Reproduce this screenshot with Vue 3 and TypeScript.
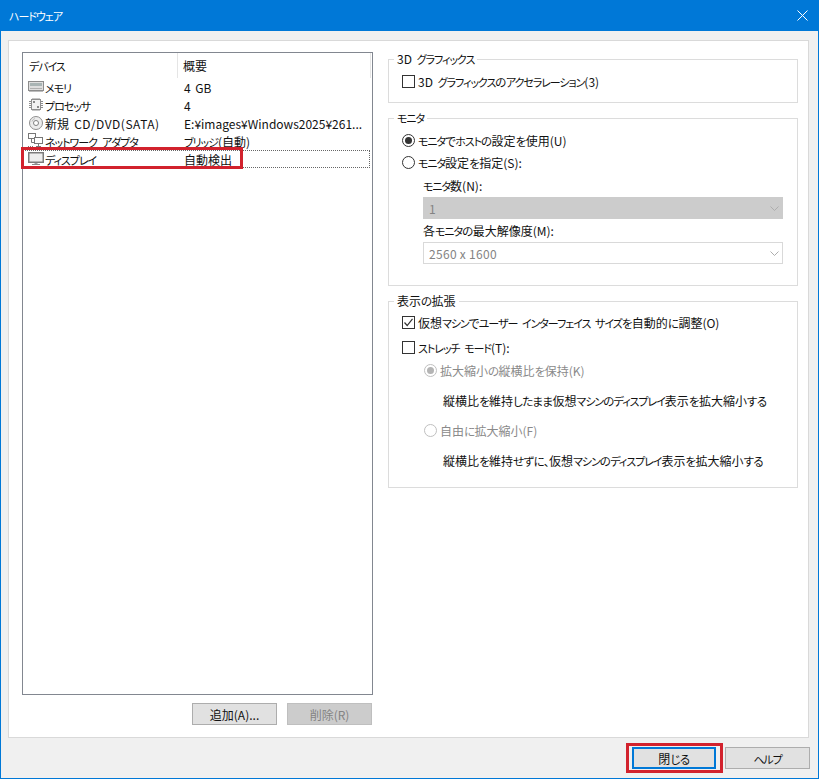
<script setup lang="ts">
import { h } from 'vue'

interface Device {
  icon: 'memory' | 'cpu' | 'disc' | 'network' | 'display'
  name: string
  summary: string
}

const devices: Device[] = [
  { icon: 'memory', name: 'メモリ', summary: '4 GB' },
  { icon: 'cpu', name: 'プロセッサ', summary: '4' },
  { icon: 'disc', name: '新規 CD/DVD(SATA)', summary: 'E:¥images¥Windows2025¥261...' },
  { icon: 'network', name: 'ネットワーク アダプタ', summary: 'ブリッジ(自動)' },
  { icon: 'display', name: 'ディスプレイ', summary: '自動検出' },
]

// Meiryo UI has narrow kana and full width kanji, so each script gets its own run
const runs = /[\u4e00-\u9fff]+|[\u3040-\u309f、]+|[\u30a0-\u30ff]+|[^\u4e00-\u9fff\u3040-\u309f、\u30a0-\u30ff]+/g

function runClass(run: string) {
  if (/[\u4e00-\u9fff]/.test(run)) return 'kanji'
  if (/[\u3040-\u309f、]/.test(run)) return 'hira'
  if (/[\u30a0-\u30ff]/.test(run)) return 'kata'
  return 'latin'
}

const T = (props: { s: string }) =>
  h(
    'span',
    { class: 'jp' },
    (props.s.match(runs) ?? []).map((run) => h('span', { class: runClass(run) }, run)),
  )
T.props = ['s']
</script>

<template>
  <div class="window">
    <header class="titlebar">
      <T s="ハードウェア" />
      <svg class="close-x" width="11" height="11" viewBox="0 0 11 11">
        <path d="M0.5 0.5 L10.5 10.5 M10.5 0.5 L0.5 10.5" stroke="#fff" stroke-width="1" fill="none" />
      </svg>
    </header>

    <div class="content">
      <main class="panel">
        <section class="left">
          <div class="list">
            <div class="list-head">
              <span class="col-name"><T s="デバイス" /></span>
              <span class="col-sum"><T s="概要" /></span>
            </div>
            <div
              v-for="d in devices"
              :key="d.icon"
              class="row"
              :class="{ focused: d.icon === 'display' }"
            >
              <span class="col-name cell">
                <svg class="dev-icon" width="17" height="16" viewBox="0 0 17 16">
                  <g v-if="d.icon === 'memory'" fill="none">
                    <rect x="0.5" y="2.5" width="15" height="9" fill="#dedede" stroke="#8c8c8c" />
                    <rect x="2" y="4" width="12" height="3" fill="#a9b4b4" />
                    <path d="M2 9.5h12" stroke="#b0b0b0" />
                    <path d="M1 12.5h14" stroke="#bdbdbd" />
                  </g>
                  <g v-else-if="d.icon === 'cpu'" fill="none" stroke="#8f8f8f">
                    <rect x="3.5" y="2.5" width="9" height="10" fill="#f2f2f2" />
                    <rect x="5" y="4" width="2" height="2" fill="#8a8a8a" stroke="none" />
                    <rect x="9" y="9" width="2" height="2" fill="#8a8a8a" stroke="none" />
                    <path d="M1 4.5h2M1 6.5h2M1 8.5h2M1 10.5h2M13 4.5h2M13 6.5h2M13 8.5h2M13 10.5h2M5 1v1M7 1v1M9 1v1M11 1v1M5 13v1M7 13v1M9 13v1M11 13v1" />
                  </g>
                  <g v-else-if="d.icon === 'disc'" fill="none">
                    <circle cx="8" cy="8" r="6.5" fill="#ececec" stroke="#8f8f8f" />
                    <circle cx="8" cy="8" r="2.5" fill="#fff" stroke="#808080" />
                    <path d="M4 6.5a4.5 4.5 0 0 1 3-3" stroke="#bdbdbd" />
                  </g>
                  <g v-else-if="d.icon === 'network'" fill="none" stroke="#777">
                    <rect x="0.5" y="0.5" width="7" height="5" fill="#fff" />
                    <rect x="6.5" y="4.5" width="8" height="6" fill="#fff" />
                    <path d="M3.5 6v3.5h3M10.5 11v2M8 13.5h5" />
                    <path d="M0 13.5h6" stroke-dasharray="1 1" />
                  </g>
                  <g v-else fill="none">
                    <rect x="0.75" y="1.75" width="14.5" height="9.5" fill="#ededed" stroke="#7c7c7c" stroke-width="1.5" />
                    <path d="M6.5 12.5h3" stroke="#a0a0a0" />
                    <path d="M4 13.5h8" stroke="#8a8a8a" />
                  </g>
                </svg>
                <span class="dev-name"><T :s="d.name" /></span>
              </span>
              <span class="col-sum"><T :s="d.summary" /></span>
            </div>
          </div>
          <div class="list-actions">
            <button class="btn" type="button"><T s="追加(A)..." /></button>
            <button class="btn disabled" type="button"><T s="削除(R)" /></button>
          </div>
          <div class="mark mark-row"></div>
        </section>

        <section class="right">
          <fieldset class="group">
            <legend><T s="3D グラフィックス" /></legend>
            <div class="pad-3d">
              <label class="opt">
                <span class="box"></span><T s="3D グラフィックスのアクセラレーション(3)" />
              </label>
            </div>
          </fieldset>

          <fieldset class="group">
            <legend><T s="モニタ" /></legend>
            <div class="pad-monitor">
              <label class="opt">
                <span class="radio on"></span><T s="モニタでホストの設定を使用(U)" />
              </label>
              <label class="opt">
                <span class="radio"></span><T s="モニタ設定を指定(S):" />
              </label>
              <div class="monitor-fields">
                <div class="field-label"><T s="モニタ数(N):" /></div>
                <div class="select filled">
                  <span>1</span>
                  <svg width="9" height="5" viewBox="0 0 9 5"><path d="M0.5 0.5 L4.5 4.5 L8.5 0.5" fill="none" stroke="#adadad" /></svg>
                </div>
                <div class="field-label second"><T s="各モニタの最大解像度(M):" /></div>
                <div class="select">
                  <span>2560 x 1600</span>
                  <svg width="9" height="5" viewBox="0 0 9 5"><path d="M0.5 0.5 L4.5 4.5 L8.5 0.5" fill="none" stroke="#adadad" /></svg>
                </div>
              </div>
            </div>
          </fieldset>

          <fieldset class="group">
            <legend><T s="表示の拡張" /></legend>
            <div class="pad-ext">
              <label class="opt">
                <span class="box">
                  <svg width="11" height="11" viewBox="0 0 11 11"><path d="M1.5 5.5 L4.2 8.5 L9.5 1.8" fill="none" stroke="#333" stroke-width="1.2" /></svg>
                </span><T s="仮想マシンでユーザー インターフェイス サイズを自動的に調整(O)" />
              </label>
              <label class="opt stretch">
                <span class="box"></span><T s="ストレッチ モード(T):" />
              </label>
              <div class="stretch-modes">
                <label class="opt off">
                  <span class="radio on"></span><T s="拡大縮小の縦横比を保持(K)" />
                </label>
                <p class="desc first"><T s="縦横比を維持したまま仮想マシンのディスプレイ表示を拡大縮小する" /></p>
                <label class="opt off">
                  <span class="radio"></span><T s="自由に拡大縮小(F)" />
                </label>
                <p class="desc"><T s="縦横比を維持せずに、仮想マシンのディスプレイ表示を拡大縮小する" /></p>
              </div>
            </div>
          </fieldset>
        </section>
      </main>

      <footer class="footer">
        <div class="close-wrap">
          <button class="btn primary" type="button"><T s="閉じる" /></button>
          <div class="mark mark-close"></div>
        </div>
        <button class="btn" type="button"><T s="ヘルプ" /></button>
      </footer>
    </div>
  </div>
</template>

<style>
html,
body {
  margin: 0;
  background: #f0f0f0;
}

.jp {
  white-space: nowrap;
}

.jp .kanji {
  letter-spacing: 0;
}

.jp .hira {
  font-size: 11.5px;
  letter-spacing: -0.55px;
}

.jp .kata {
  font-size: 11px;
  letter-spacing: -1.05px;
}

.jp .latin {
  letter-spacing: 0;
  word-spacing: 2px;
}

.dev-name .jp .latin {
  letter-spacing: 0.5px;
}
</style>

<style scoped>
.window {
  width: 819px;
  height: 779px;
  box-sizing: border-box;
  display: flex;
  flex-direction: column;
  background: #f0f0f0;
  border: 1px solid #0078d7;
  border-top: 0;
  font-family: "Noto Sans CJK JP", "Liberation Sans", sans-serif;
  font-size: 12px;
  font-feature-settings: "palt";
  color: #111;
}

.titlebar {
  height: 31px;
  flex: none;
  background: #0078d7;
  display: flex;
  align-items: center;
  justify-content: space-between;
  padding: 0 10px 0 8px;
  color: #fff;
}

.close-x {
  display: block;
}

.content {
  flex: 1;
  display: flex;
  flex-direction: column;
  padding: 9px 9px 0 7px;
  min-height: 0;
}

.panel {
  height: 698px;
  box-sizing: border-box;
  background: #fff;
  border: 1px solid #d9d9d9;
  display: flex;
  padding: 10px 10px 0 13px;
}

.left {
  position: relative;
  width: 351px;
  flex: none;
  margin-top: 1px;
}

.list {
  height: 643px;
  box-sizing: border-box;
  border: 1px solid #828790;
  padding-right: 1px;
}

.list-head {
  display: flex;
  height: 25px;
  align-items: center;
  box-sizing: border-box;
  background: linear-gradient(to right, transparent 154px, #e5e5e5 154px, #e5e5e5 155px, transparent 155px);
  border-right: 1px solid #e5e5e5;
}

.list-head .col-name {
  padding-left: 6px;
}

.col-name {
  width: 154px;
  flex: none;
  box-sizing: border-box;
}

.col-sum {
  padding-left: 6px;
  white-space: nowrap;
}

.row {
  display: flex;
  align-items: center;
  height: 16px;
  border: 1px dotted transparent;
  margin-right: 1px;
}

.row.focused {
  border-color: #666;
}

.cell {
  display: flex;
  align-items: center;
  padding-left: 4px;
}

.dev-icon {
  flex: none;
  display: block;
}

.dev-name {
  white-space: nowrap;
}

.list-actions {
  display: flex;
  justify-content: flex-end;
  gap: 10px;
  margin-top: 8px;
  padding-right: 1px;
}

.btn {
  width: 85px;
  height: 22px;
  box-sizing: border-box;
  padding: 0;
  background: #e1e1e1;
  border: 1px solid #adadad;
  font: inherit;
  color: #111;
  font-feature-settings: inherit;
}

.btn.disabled {
  background: #cccccc;
  border-color: #bfbfbf;
  color: #838383;
}

.btn.primary {
  width: 84px;
  border: 2px solid #0078d7;
}

.right {
  flex: 1;
  margin-left: 15px;
  display: flex;
  flex-direction: column;
  gap: 7px;
}

.group {
  margin: 0;
  padding: 0 0 0 13px;
  border: 1px solid #dcdcdc;
  min-width: 0;
}

.group legend {
  margin-left: -8px;
  padding: 0 3px;
  height: 16px;
  line-height: 15px;
}

.pad-3d {
  padding: 5px 0 12px;
}

.pad-monitor {
  padding: 5px 0 21px;
  display: flex;
  flex-direction: column;
  gap: 4px;
}

.pad-ext {
  padding: 4px 0 5px;
  display: flex;
  flex-direction: column;
}

.opt {
  display: flex;
  align-items: center;
  height: 18px;
  white-space: nowrap;
}

.stretch {
  margin-top: 7px;
}

.box,
.radio {
  flex: none;
  width: 13px;
  height: 13px;
  box-sizing: border-box;
  margin-right: 3px;
  border: 1px solid #333;
  background: #fff;
  display: flex;
  align-items: center;
  justify-content: center;
}

.radio {
  border-radius: 50%;
}

.radio.on::after {
  content: "";
  width: 7px;
  height: 7px;
  border-radius: 50%;
  background: #333;
}

.monitor-fields {
  padding: 3px 14px 0 21px;
}

.field-label {
  height: 16px;
  line-height: 15px;
  margin-bottom: 3px;
}

.field-label.second {
  margin-top: 4px;
  margin-bottom: 3px;
}

.select {
  height: 22px;
  box-sizing: border-box;
  border: 1px solid #d9d9d9;
  display: flex;
  align-items: center;
  justify-content: space-between;
  padding: 0 3px 0 5px;
  color: #838383;
  letter-spacing: 0.3px;
}

.select.filled {
  background: #cccccc;
  border-color: #cccccc;
}

.stretch-modes {
  padding-left: 22px;
  margin-top: 5px;
}

.off {
  color: #8a8a8a;
}

.off .radio {
  border-color: #c0c0c0;
}

.off .radio.on::after {
  background: #b4b4b4;
}

.desc {
  margin: 13px 0 12px;
  padding-left: 19px;
  height: 18px;
  line-height: 18px;
  white-space: nowrap;
}

.desc.first {
  margin: 13px 0 11px;
}

.footer {
  flex: 1;
  display: flex;
  justify-content: flex-end;
  gap: 9px;
  padding: 9px 0 0 0;
  margin-right: -1px;
}

.close-wrap {
  position: relative;
  height: 22px;
}

.mark {
  position: absolute;
  border: 3px solid #d2222d;
  box-sizing: border-box;
  pointer-events: none;
}

.mark-row {
  left: -1px;
  top: 95px;
  width: 222px;
  height: 22px;
}

.mark-close {
  left: -6px;
  top: -4px;
  width: 97px;
  height: 30px;
}
</style>
